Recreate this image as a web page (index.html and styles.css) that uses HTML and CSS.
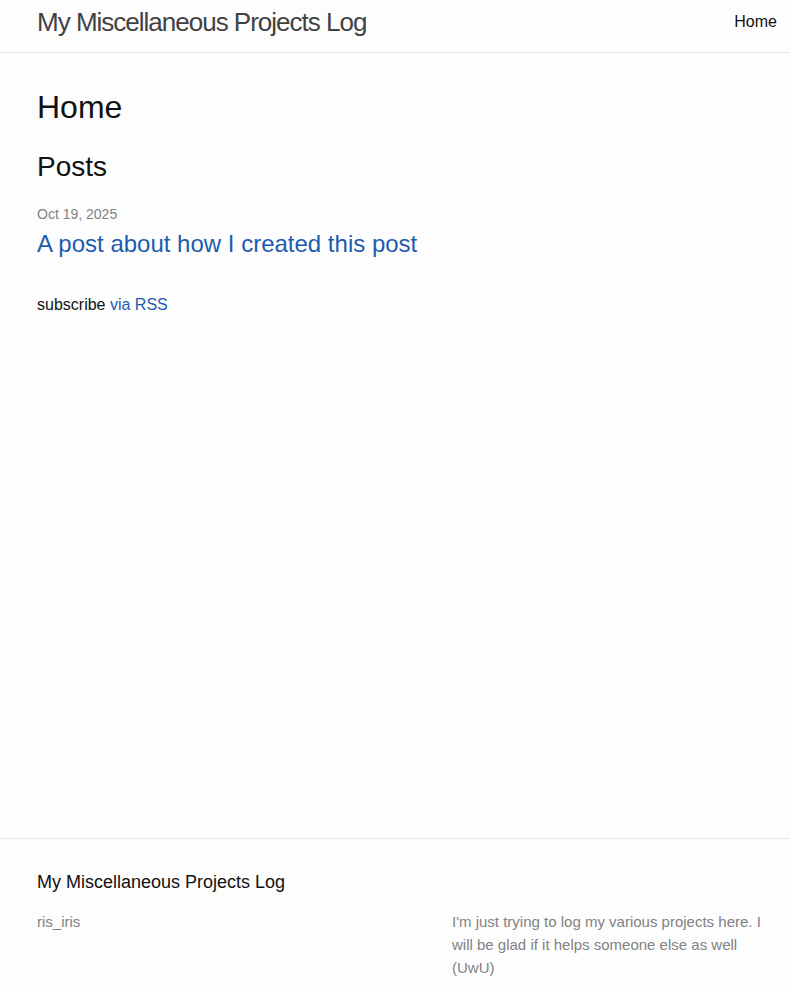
FILE: index.html
```html
<!DOCTYPE html>
<html lang="en">
<head>
<meta charset="utf-8">
<title>My Miscellaneous Projects Log</title>
<link rel="stylesheet" href="styles.css">
</head>
<body>
<div class="page">
  <header class="site-header">
    <div class="wrapper header-row">
      <a class="site-title" href="#">My Miscellaneous Projects Log</a>
      <nav class="site-nav"><a class="page-link" href="#">Home</a></nav>
    </div>
  </header>
  <main class="page-content">
    <div class="wrapper">
      <h1 class="page-heading">Home</h1>
      <h2 class="post-list-heading">Posts</h2>
      <ul class="post-list">
        <li>
          <span class="post-meta">Oct 19, 2025</span>
          <h3><a class="post-link" href="#">A post about how I created this post</a></h3>
        </li>
      </ul>
      <p class="rss-subscribe">subscribe <a href="#">via RSS</a></p>
    </div>
  </main>
  <footer class="site-footer">
    <div class="wrapper">
      <h2 class="footer-heading">My Miscellaneous Projects Log</h2>
      <div class="footer-cols">
        <div class="footer-col col-1">ris_iris</div>
        <div class="footer-col col-2"></div>
        <div class="footer-col col-3">I'm just trying to log my various projects here. I will be glad if it helps someone else as well (UwU)</div>
      </div>
    </div>
  </footer>
</div>
</body>
</html>
```

FILE: styles.css
```css
* { box-sizing: border-box; }
html, body { margin: 0; padding: 0; }
body {
  background: #fdfdfd;
  color: #111111;
  font-family: "Liberation Sans", Arial, sans-serif;
  font-size: 16px;
  line-height: 1.5;
}
a { text-decoration: none; color: #1d5bb0; }
.page {
  min-height: 989px;
  display: flex;
  flex-direction: column;
}
.wrapper {
  width: 790px;
  padding: 0 13px 0 37px;
}
.site-header {
  border-bottom: 1px solid #e8e8e8;
}
.header-row {
  display: flex;
  justify-content: space-between;
  align-items: flex-start;
  height: 52px;
}
.site-title {
  font-size: 26px;
  font-weight: 300;
  letter-spacing: -1px;
  color: #424242;
  line-height: 44px;
}
.page-link {
  color: #111111;
  line-height: 44px;
}
.page-content {
  flex: 1;
  padding-top: 30px;
}
.page-heading {
  font-size: 32px;
  font-weight: 400;
  margin: 0 0 15px;
  line-height: 48px;
}
.post-list-heading {
  font-size: 28px;
  font-weight: 400;
  margin: 0 0 15px;
  line-height: 42px;
}
.post-list {
  list-style: none;
  margin: 0 0 31px;
  padding: 0;
}
.post-meta {
  font-size: 14px;
  color: #828282;
  line-height: 22px;
  margin-bottom: 1px;
  display: block;
}
.post-list h3 {
  margin: 0;
  font-weight: 400;
}
.post-link {
  display: block;
  font-size: 24px;
  line-height: 36px;
}
.rss-subscribe {
  margin: 0;
}
.site-footer {
  border-top: 1px solid #e8e8e8;
  padding: 30px 0 0;
  height: 151px;
}
.footer-heading {
  font-size: 18px;
  font-weight: 400;
  margin: 0 0 14px;
  line-height: 27px;
}
.footer-cols {
  display: flex;
  margin-left: -15px;
  font-size: 15px;
  line-height: 23px;
  color: #828282;
}
.footer-col { padding-left: 15px; }
.col-1 { width: 264px; }
.col-2 { width: 151px; }
.col-3 { width: 340px; }
```
